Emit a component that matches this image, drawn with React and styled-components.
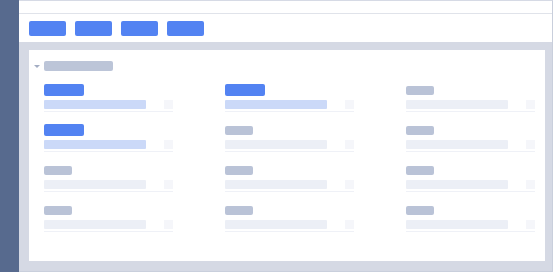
import styled, { createGlobalStyle } from "styled-components";

const GlobalStyle = createGlobalStyle`
  html, body {
    margin: 0;
    padding: 0;
    background: #fff;
    font-family: "Liberation Sans", Arial, sans-serif;
  }
`;

const Shell = styled.div`
  display: flex;
  width: 553px;
  height: 272px;
  overflow: hidden;
`;

const Sidebar = styled.div`
  width: 19px;
  flex-shrink: 0;
  background: #576a8e;
`;

const Main = styled.div`
  flex: 1;
  min-width: 0;
  display: flex;
  flex-direction: column;
  border-top: 1px solid #d6dae5;
  border-right: 1px solid #c9cfdc;
  border-bottom: 1px solid #c9cfdc;
`;

const TopBar = styled.div`
  height: 12px;
  background: #fff;
  border-bottom: 1px solid #e0e3ea;
`;

const Toolbar = styled.div`
  height: 28px;
  display: flex;
  align-items: flex-start;
  gap: 9px;
  padding: 7px 0 0 10px;
  box-sizing: border-box;
  background: #fff;
`;

const ToolButton = styled.div`
  width: 37px;
  height: 15px;
  border-radius: 2px;
  background: #5383f2;
`;

const Canvas = styled.div`
  flex: 1;
  display: flex;
  padding: 8px 7px 10px 10px;
  background: #d5d9e4;
`;

const Card = styled.div`
  flex: 1;
  min-width: 0;
  background: #fff;
  padding: 11px 0 0 5px;
`;

const SectionHead = styled.div`
  display: flex;
  align-items: center;
  gap: 4px;
  height: 10px;
`;

const Caret = styled.div`
  width: 0;
  height: 0;
  border-left: 3px solid transparent;
  border-right: 3px solid transparent;
  border-top: 3px solid #a3adc3;
`;

const HeadBar = styled.div`
  width: 69px;
  height: 10px;
  border-radius: 2px;
  background: #bcc5d8;
`;

const Grid = styled.div`
  display: grid;
  grid-template-columns: 181px 181px 129px;
  row-gap: 12px;
  margin: 13px 0 0 10px;
`;

const Field = styled.div`
  width: 129px;
  display: flex;
  flex-direction: column;
`;

const LabelRow = styled.div`
  height: 12px;
  display: flex;
  align-items: center;
`;

const Label = styled.div`
  width: ${(p) => (p.$active ? 40 : 28)}px;
  height: ${(p) => (p.$active ? 12 : 9)}px;
  border-radius: 2px;
  background: ${(p) => (p.$active ? "#5383f2" : "#bac3d7")};
`;

const InputRow = styled.div`
  display: flex;
  justify-content: space-between;
  margin-top: 4px;
  height: 9px;
`;

const Input = styled.div`
  width: 102px;
  height: 9px;
  border-radius: 1px;
  background: ${(p) => (p.$active ? "#cbd9f8" : "#eceff6")};
`;

const Square = styled.div`
  width: 9px;
  height: 9px;
  background: #f5f6fa;
`;

const Underline = styled.div`
  margin-top: 2px;
  height: 1px;
  background: #eff1f7;
`;

const fields = Array.from({ length: 12 }, (_, i) => {
  const col = i % 3;
  const row = Math.floor(i / 3);
  return (col === 0 && row < 2) || (col === 1 && row === 0);
});

export default function App() {
  return (
    <>
      <GlobalStyle />
      <Shell>
        <Sidebar />
        <Main>
          <TopBar />
          <Toolbar>
            {[0, 1, 2, 3].map((i) => (
              <ToolButton key={i} />
            ))}
          </Toolbar>
          <Canvas>
            <Card>
              <SectionHead>
                <Caret />
                <HeadBar />
              </SectionHead>
              <Grid>
                {fields.map((active, i) => (
                  <Field key={i}>
                    <LabelRow>
                      <Label $active={active} />
                    </LabelRow>
                    <InputRow>
                      <Input $active={active} />
                      <Square />
                    </InputRow>
                    <Underline />
                  </Field>
                ))}
              </Grid>
            </Card>
          </Canvas>
        </Main>
      </Shell>
    </>
  );
}
